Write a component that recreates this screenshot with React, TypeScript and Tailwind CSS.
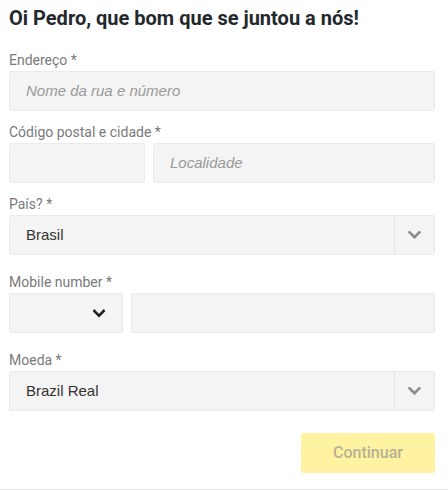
import React from "react";

const Chevron = ({ className }: { className: string }) => (
  <svg viewBox="0 0 14 9" className={className} fill="none">
    <path d="M1.5 1.5 L7 7 L12.5 1.5" stroke="currentColor" strokeWidth="3" strokeLinecap="square" />
  </svg>
);

const Label = ({ children, className = "" }: { children: React.ReactNode; className?: string }) => (
  <p className={`font-['Roboto',sans-serif] text-[14px] leading-[20px] text-[#7a7a7a] ${className}`}>{children}</p>
);

const boxCls =
  "h-[40px] rounded-[2px] border border-[#ebebeb] bg-[#f4f4f4] flex items-center font-['Liberation_Sans',Arial,sans-serif] text-[15px]";

export default function App() {
  return (
    <div className="h-[490px] w-[448px] border-b border-[#e3e3e3] bg-white">
      <div className="pl-[9px] pr-[13px] pt-[4px]">
        <h1 className="font-['Roboto',sans-serif] text-[20px] font-bold leading-[28px] text-[#22282c]">
          Oi Pedro, que bom que se juntou a nós!
        </h1>

        <Label className="mt-[18px]">Endereço *</Label>
        <div className={`${boxCls} mt-[1px] pl-[16px] italic text-[#9a9a9a]`}>Nome da rua e número</div>

        <Label className="mt-[11px]">Código postal e cidade *</Label>
        <div className="mt-[1px] flex gap-[8px]">
          <div className={`${boxCls} w-[136px]`} />
          <div className={`${boxCls} flex-1 pl-[16px] italic text-[#9a9a9a]`}>Localidade</div>
        </div>

        <Label className="mt-[11px]">País? *</Label>
        <div className={`${boxCls} mt-[1px]`}>
          <span className="flex-1 pl-[16px] text-[#333]">Brasil</span>
          <div className="flex h-full w-[40px] items-center justify-center border-l border-[#e4e4e4]">
            <Chevron className="h-[8px] w-[13px] text-[#8c8c8c]" />
          </div>
        </div>

        <Label className="mt-[17px]">Mobile number *</Label>
        <div className="mt-[1px] flex gap-[8px]">
          <div className={`${boxCls} w-[114px] justify-end pr-[17px]`}>
            <Chevron className="h-[9px] w-[12px] text-[#1e1e1e]" />
          </div>
          <div className={`${boxCls} flex-1`} />
        </div>

        <Label className="mt-[17px]">Moeda *</Label>
        <div className={`${boxCls} mt-[1px]`}>
          <span className="flex-1 pl-[16px] text-[#333]">Brazil Real</span>
          <div className="flex h-full w-[40px] items-center justify-center border-l border-[#e4e4e4]">
            <Chevron className="h-[8px] w-[13px] text-[#8c8c8c]" />
          </div>
        </div>

        <div className="mt-[22px] flex justify-end">
          <button className="h-[40px] w-[134px] rounded-[3px] bg-[#fff2a1] font-['Roboto',sans-serif] text-[16px] font-medium text-[#b7b194]">
            Continuar
          </button>
        </div>
      </div>
    </div>
  );
}
